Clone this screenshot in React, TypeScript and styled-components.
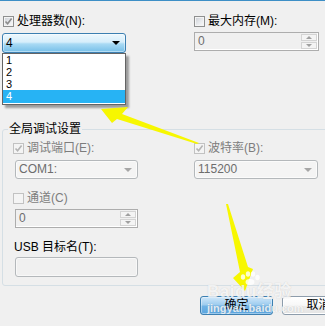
import React from 'react';
import styled, { createGlobalStyle } from 'styled-components';

const GlobalStyle = createGlobalStyle`
  html, body {
    margin: 0;
    padding: 0;
    background: #f0f0f0;
  }
  body {
    font-family: 'Liberation Sans', 'Noto Sans CJK SC', sans-serif;
    font-size: 12px;
    color: #000;
  }
`;

const Page = styled.div`
  position: relative;
  width: 325px;
  height: 326px;
  overflow: hidden;
  box-sizing: border-box;
  border-top: 1px solid #3d8fc6;
  background: #f0f0f0;
`;

const TopGrid = styled.div`
  display: grid;
  grid-template-columns: 194px 1fr;
  padding-top: 14px;
`;

const LeftCol = styled.div`
  position: relative;
  padding-left: 2px;
`;

const Col = styled.div`
  display: flex;
  flex-direction: column;
  align-items: flex-start;
`;

const CheckRow = styled.div<{ $indent?: number; $top?: number }>`
  display: flex;
  align-items: center;
  gap: 3px;
  height: 13px;
  margin-left: ${(p) => p.$indent ?? 0}px;
  margin-top: ${(p) => p.$top ?? 0}px;
`;

const Box = styled.div<{ $disabled?: boolean }>`
  display: flex;
  align-items: center;
  justify-content: center;
  width: 11px;
  height: 11px;
  box-sizing: border-box;
  border: 1px solid ${(p) => (p.$disabled ? '#c2c2c2' : '#8e8f8f')};
  background: ${(p) =>
    p.$disabled ? '#f4f4f4' : 'linear-gradient(135deg, #c9cdd3 0%, #e8eaed 55%, #fbfbfb 100%)'};
  box-shadow: inset 0 0 0 1px #f4f4f4;
`;

const Label = styled.span<{ $disabled?: boolean }>`
  line-height: 13px;
  white-space: nowrap;
  color: ${(p) => (p.$disabled ? '#7d7d7d' : '#000')};
`;

const Combo = styled.div<{ $active?: boolean; $width: number; $height: number; $indent?: number; $top?: number }>`
  display: flex;
  align-items: center;
  justify-content: space-between;
  box-sizing: border-box;
  width: ${(p) => p.$width}px;
  height: ${(p) => p.$height}px;
  margin-left: ${(p) => p.$indent ?? 0}px;
  margin-top: ${(p) => p.$top ?? 0}px;
  padding: 0 5px 0 3px;
  border: 1px solid ${(p) => (p.$active ? '#3c7fb1' : '#b4b8bb')};
  border-radius: 3px;
  color: ${(p) => (p.$active ? '#000' : '#6d6d6d')};
  background: ${(p) =>
    p.$active
      ? 'linear-gradient(to bottom, #eef8fd 0%, #d6eefb 45%, #a9daf4 55%, #76bfe8 100%)'
      : '#f4f4f4'};
  box-shadow: inset 0 0 0 1px ${(p) => (p.$active ? 'rgba(255,255,255,0.45)' : '#fbfbfb')};
  line-height: 13px;
`;

const Arrow = styled.span<{ $active?: boolean }>`
  width: 0;
  height: 0;
  border-left: 4px solid transparent;
  border-right: 4px solid transparent;
  border-top: 4px solid ${(p) => (p.$active ? '#000' : '#a6a6a6')};
`;

const DropList = styled.div`
  position: absolute;
  left: 2px;
  top: 38px;
  width: 124px;
  box-sizing: border-box;
  padding-bottom: 1px;
  border: 1px solid #646464;
  background: #fff;
  box-shadow: 3px 3px 2px rgba(0, 0, 0, 0.35);
`;

const ListItem = styled.div<{ $selected?: boolean }>`
  height: ${(p) => (p.$selected ? 13 : 12)}px;
  line-height: ${(p) => (p.$selected ? 13 : 12)}px;
  padding-left: 3px;
  font-size: 11px;
  color: ${(p) => (p.$selected ? '#fff' : '#000')};
  background: ${(p) => (p.$selected ? '#27b3f4' : 'transparent')};
`;

const SpinBox = styled.div<{ $width: number; $indent?: number; $top?: number }>`
  display: flex;
  box-sizing: border-box;
  width: ${(p) => p.$width}px;
  height: 19px;
  margin-left: ${(p) => p.$indent ?? 0}px;
  margin-top: ${(p) => p.$top ?? 0}px;
  border: 1px solid #adadad;
  background: #f0f0f0;
  box-shadow: inset -1px -1px 0 #fff;
`;

const SpinText = styled.div`
  flex: 1;
  padding-left: 3px;
  line-height: 16px;
  color: #6d6d6d;
`;

const SpinButtons = styled.div`
  display: flex;
  flex-direction: column;
  width: 16px;
  padding: 1px 1px 1px 0;
  gap: 1px;
`;

const SpinBtn = styled.div`
  flex: 1;
  display: flex;
  align-items: center;
  justify-content: center;
  border: 1px solid #d4d4d4;
  background: #f4f4f4;
`;

const Tri = styled.span<{ $up?: boolean }>`
  width: 0;
  height: 0;
  border-left: 3px solid transparent;
  border-right: 3px solid transparent;
  ${(p) => (p.$up ? 'border-bottom: 3px solid #a0a0a0;' : 'border-top: 3px solid #a0a0a0;')}
`;

const Group = styled.fieldset`
  margin: 70px 0 0 2px;
  width: 340px;
  box-sizing: border-box;
  padding: 6px 0 8px 10px;
  border: 1px solid #d5dfe5;
  border-radius: 3px;
`;

const Legend = styled.legend`
  margin-left: -5px;
  padding: 0 1px;
  line-height: 13px;
`;

const GroupGrid = styled.div`
  display: grid;
  grid-template-columns: 181px 1fr;
`;

const TextBox = styled.div<{ $top?: number; $indent?: number }>`
  box-sizing: border-box;
  width: 123px;
  height: 20px;
  margin-left: ${(p) => p.$indent ?? 0}px;
  margin-top: ${(p) => p.$top ?? 0}px;
  border: 1px solid #b4b8bb;
  border-radius: 3px;
  background: #f0f0f0;
  box-shadow: inset 0 0 0 1px #f8f8f8;
`;

const ButtonRow = styled.div`
  display: flex;
  gap: 9px;
  margin-top: 10px;
  padding-left: 200px;
`;

const Button = styled.div<{ $primary?: boolean }>`
  flex: none;
  box-sizing: border-box;
  width: 73px;
  height: 19px;
  line-height: 17px;
  text-align: center;
  border: 1px solid ${(p) => (p.$primary ? '#3c7fb1' : '#8d9cab')};
  border-radius: 3px;
  background: ${(p) =>
    p.$primary
      ? 'linear-gradient(to bottom, #cfe7fa 0%, #9fcdef 45%, #6fb2e5 55%, #5aa5df 100%)'
      : 'linear-gradient(to bottom, #ffffff 0%, #f7f7f7 50%, #ececec 55%, #e4e4e4 100%)'};
  box-shadow: inset 0 0 0 1px ${(p) => (p.$primary ? 'rgba(255,255,255,0.4)' : '#fff')};
`;

const Watermark = styled.div`
  position: absolute;
  left: 207px;
  top: 282px;
  color: rgba(255, 255, 255, 0.8);
  text-shadow: 0 0 1px rgba(120, 120, 120, 0.35);
  pointer-events: none;
`;

const MarkTitle = styled.div`
  font-family: 'Liberation Sans', 'Noto Sans CJK SC', sans-serif;
  font-weight: bold;
  font-size: 17px;
  line-height: 17px;
  letter-spacing: 0.5px;
`;

const MarkSub = styled.div`
  margin-top: 3px;
  font-family: 'Liberation Sans', sans-serif;
  font-weight: bold;
  font-size: 11px;
  line-height: 11px;
`;

const Paw = styled.svg`
  position: absolute;
  left: 32px;
  top: -12px;
`;

const Overlay = styled.svg`
  position: absolute;
  left: 0;
  top: 0;
  pointer-events: none;
`;

const CheckMark = ({ color }: { color: string }) => (
  <svg width="9" height="9" viewBox="0 0 9 9">
    <path d="M1.5 4.5 L3.6 6.8 L7.6 1.6" fill="none" stroke={color} strokeWidth="1.6" />
  </svg>
);

const Check = ({ checked, disabled }: { checked?: boolean; disabled?: boolean }) => (
  <Box $disabled={disabled}>{checked && <CheckMark color={disabled ? '#b4b4b4' : '#8c8c8c'} />}</Box>
);

const Spin = ({ value, width, indent, top }: { value: string; width: number; indent?: number; top?: number }) => (
  <SpinBox $width={width} $indent={indent} $top={top}>
    <SpinText>{value}</SpinText>
    <SpinButtons>
      <SpinBtn>
        <Tri $up />
      </SpinBtn>
      <SpinBtn>
        <Tri />
      </SpinBtn>
    </SpinButtons>
  </SpinBox>
);

const cpuOptions = ['1', '2', '3', '4'];

export default function App() {
  return (
    <Page>
      <GlobalStyle />
      <TopGrid>
        <LeftCol>
          <Col>
            <CheckRow $indent={1}>
              <Check checked />
              <Label>处理器数(N):</Label>
            </CheckRow>
            <Combo $active $width={124} $height={20} $top={5}>
              <span>4</span>
              <Arrow $active />
            </Combo>
          </Col>
          <DropList>
            {cpuOptions.map((opt) => (
              <ListItem key={opt} $selected={opt === '4'}>
                {opt}
              </ListItem>
            ))}
          </DropList>
        </LeftCol>
        <Col>
          <CheckRow>
            <Check />
            <Label>最大内存(M):</Label>
          </CheckRow>
          <Spin value="0" width={125} top={4} />
        </Col>
      </TopGrid>

      <Group>
        <Legend>全局调试设置</Legend>
        <GroupGrid>
          <Col>
            <CheckRow>
              <Check checked disabled />
              <Label $disabled>调试端口(E):</Label>
            </CheckRow>
            <Combo $width={123} $height={19} $indent={2} $top={5}>
              <span>COM1:</span>
              <Arrow />
            </Combo>
            <CheckRow $top={13}>
              <Check disabled />
              <Label $disabled>通道(C)</Label>
            </CheckRow>
            <Spin value="0" width={123} indent={2} top={4} />
            <CheckRow $indent={1} $top={13}>
              <Label>USB 目标名(T):</Label>
            </CheckRow>
            <TextBox $indent={2} $top={3} />
          </Col>
          <Col>
            <CheckRow>
              <Check checked disabled />
              <Label $disabled>波特率(B):</Label>
            </CheckRow>
            <Combo $width={124} $height={19} $top={5}>
              <span>115200</span>
              <Arrow />
            </Combo>
          </Col>
        </GroupGrid>
      </Group>

      <ButtonRow>
        <Button $primary>确定</Button>
        <Button>取消</Button>
      </ButtonRow>

      <Overlay width="325" height="326" viewBox="0 0 325 326">
        <polygon
          points="101,108 128,106 122,113 199,142 197,143 117,118 112,122"
          fill="#f7f700"
        />
        <polygon
          points="226,203 228,203 248,266 253,268 245,290 233,277 240,271"
          fill="#f7f700"
        />
      </Overlay>

      <Watermark>
        <Paw width="22" height="14" viewBox="0 0 22 14">
          <ellipse cx="4" cy="6" rx="2.2" ry="2.8" fill="rgba(255,255,255,0.8)" />
          <ellipse cx="9" cy="3" rx="2.2" ry="2.8" fill="rgba(255,255,255,0.8)" />
          <ellipse cx="14" cy="3" rx="2.2" ry="2.8" fill="rgba(255,255,255,0.8)" />
          <ellipse cx="18.5" cy="6.5" rx="2.2" ry="2.8" fill="rgba(255,255,255,0.8)" />
          <ellipse cx="11" cy="11" rx="4.5" ry="3" fill="rgba(255,255,255,0.8)" />
        </Paw>
        <MarkTitle>Baidu经验</MarkTitle>
        <MarkSub>jingyan.baidu.com</MarkSub>
      </Watermark>
    </Page>
  );
}
